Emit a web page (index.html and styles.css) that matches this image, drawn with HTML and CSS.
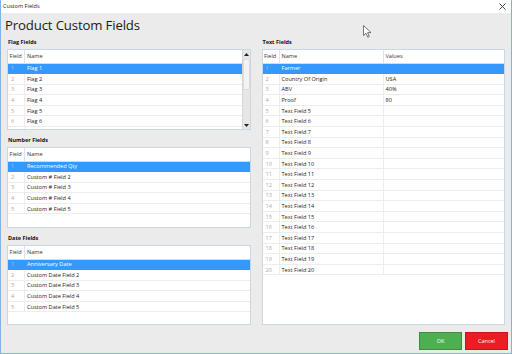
FILE: index.html
```html
<!DOCTYPE html>
<html>
<head>
<meta charset="utf-8">
<link rel="stylesheet" href="styles.css">
</head>
<body>
<div class="window">
  <div class="titlebar">
    <span class="title">Custom Fields</span>
    <svg class="close" width="7" height="7" viewBox="0 0 7 7"><path d="M0.5 0.5L6.5 6.5M6.5 0.5L0.5 6.5" stroke="#333" stroke-width="0.9" fill="none"/></svg>
  </div>
  <div class="content">
    <h1 class="heading">Product Custom Fields</h1>
    <div class="columns">
      <div class="col">
        <section class="group">
          <div class="group-label">Flag Fields</div>
          <div class="grid grid-flag">
            <div class="grid-body">
              <div class="row head"><div class="c num">Field</div><div class="c name">Name</div></div>
              <div class="row sel"><div class="c num">1</div><div class="c name">Flag 1</div></div>
              <div class="row"><div class="c num">2</div><div class="c name">Flag 2</div></div>
              <div class="row"><div class="c num">3</div><div class="c name">Flag 3</div></div>
              <div class="row"><div class="c num">4</div><div class="c name">Flag 4</div></div>
              <div class="row"><div class="c num">5</div><div class="c name">Flag 5</div></div>
              <div class="row"><div class="c num">6</div><div class="c name">Flag 6</div></div>
              <div class="row"><div class="c num"></div><div class="c name"></div></div>
            </div>
            <div class="scrollbar">
              <div class="sb-btn"><svg width="5" height="3" viewBox="0 0 5 3"><path d="M0 3L2.5 0L5 3Z" fill="#222"/></svg></div>
              <div class="sb-track"><div class="sb-thumb"></div></div>
              <div class="sb-btn"><svg width="5" height="3" viewBox="0 0 5 3"><path d="M0 0L2.5 3L5 0Z" fill="#222"/></svg></div>
            </div>
          </div>
        </section>
        <section class="group">
          <div class="group-label">Number Fields</div>
          <div class="grid grid-small">
            <div class="grid-body">
              <div class="row head"><div class="c num">Field</div><div class="c name">Name</div></div>
              <div class="row sel"><div class="c num">1</div><div class="c name">Recommended Qty</div></div>
              <div class="row"><div class="c num">2</div><div class="c name">Custom # Field 2</div></div>
              <div class="row"><div class="c num">3</div><div class="c name">Custom # Field 3</div></div>
              <div class="row"><div class="c num">4</div><div class="c name">Custom # Field 4</div></div>
              <div class="row"><div class="c num">5</div><div class="c name">Custom # Field 5</div></div>
            </div>
          </div>
        </section>
        <section class="group">
          <div class="group-label">Date Fields</div>
          <div class="grid grid-small grid-date">
            <div class="grid-body">
              <div class="row head"><div class="c num">Field</div><div class="c name">Name</div></div>
              <div class="row sel"><div class="c num">1</div><div class="c name">Anniversary Date</div></div>
              <div class="row"><div class="c num">2</div><div class="c name">Custom Date Field 2</div></div>
              <div class="row"><div class="c num">3</div><div class="c name">Custom Date Field 3</div></div>
              <div class="row"><div class="c num">4</div><div class="c name">Custom Date Field 4</div></div>
              <div class="row"><div class="c num">5</div><div class="c name">Custom Date Field 5</div></div>
            </div>
          </div>
        </section>
      </div>
      <div class="col">
        <section class="group group-text">
          <div class="group-label">Text Fields</div>
          <div class="grid grid-text">
            <div class="grid-body">
              <div class="row head"><div class="c num">Field</div><div class="c name">Name</div><div class="c val">Values</div></div>
              <div class="row sel"><div class="c num">1</div><div class="c name">Farmer</div><div class="c val"></div></div>
              <div class="row"><div class="c num">2</div><div class="c name">Country Of Origin</div><div class="c val">USA</div></div>
              <div class="row"><div class="c num">3</div><div class="c name">ABV</div><div class="c val">40%</div></div>
              <div class="row"><div class="c num">4</div><div class="c name">Proof</div><div class="c val">80</div></div>
              <div class="row"><div class="c num">5</div><div class="c name">Text Field 5</div><div class="c val"></div></div>
              <div class="row"><div class="c num">6</div><div class="c name">Text Field 6</div><div class="c val"></div></div>
              <div class="row"><div class="c num">7</div><div class="c name">Text Field 7</div><div class="c val"></div></div>
              <div class="row"><div class="c num">8</div><div class="c name">Text Field 8</div><div class="c val"></div></div>
              <div class="row"><div class="c num">9</div><div class="c name">Text Field 9</div><div class="c val"></div></div>
              <div class="row"><div class="c num">10</div><div class="c name">Text Field 10</div><div class="c val"></div></div>
              <div class="row"><div class="c num">11</div><div class="c name">Text Field 11</div><div class="c val"></div></div>
              <div class="row"><div class="c num">12</div><div class="c name">Text Field 12</div><div class="c val"></div></div>
              <div class="row"><div class="c num">13</div><div class="c name">Text Field 13</div><div class="c val"></div></div>
              <div class="row"><div class="c num">14</div><div class="c name">Text Field 14</div><div class="c val"></div></div>
              <div class="row"><div class="c num">15</div><div class="c name">Text Field 15</div><div class="c val"></div></div>
              <div class="row"><div class="c num">16</div><div class="c name">Text Field 16</div><div class="c val"></div></div>
              <div class="row"><div class="c num">17</div><div class="c name">Text Field 17</div><div class="c val"></div></div>
              <div class="row"><div class="c num">18</div><div class="c name">Text Field 18</div><div class="c val"></div></div>
              <div class="row"><div class="c num">19</div><div class="c name">Text Field 19</div><div class="c val"></div></div>
              <div class="row"><div class="c num">20</div><div class="c name">Text Field 20</div><div class="c val"></div></div>
            </div>
          </div>
        </section>
      </div>
    </div>
    <div class="actions">
      <button class="btn btn-ok">OK</button>
      <button class="btn btn-cancel">Cancel</button>
    </div>
  </div>
  <svg class="cursor" width="9" height="13" viewBox="0 0 9 13"><path d="M0.5 0.5L0.5 10.5L3 8.2L4.8 12.2L6.3 11.5L4.6 7.6L8 7.6Z" fill="#fff" stroke="#555" stroke-width="0.8" stroke-linejoin="round"/></svg>
</div>
</body>
</html>
```

FILE: styles.css
```css
* { box-sizing: border-box; }
html, body { margin: 0; padding: 0; }
body {
  width: 512px;
  height: 354px;
  overflow: hidden;
  font-family: "Open Sans", "Noto Sans", sans-serif;
  color: #222;
}
.window {
  position: relative;
  width: 512px;
  height: 354px;
  border: 1px solid #7fb2e5;
  border-top: none;
  background: #ebebeb;
  display: flex;
  flex-direction: column;
}
.titlebar {
  height: 13px;
  background: #fff;
  display: flex;
  align-items: center;
  justify-content: space-between;
  padding: 0 5px 0 2px;
  flex: none;
}
.title {
  font-size: 5.6px;
  color: #222;
  line-height: 1;
}
.close { display: block; }
.content {
  flex: 1;
  display: flex;
  flex-direction: column;
  padding: 0 6px 3px 6px;
}
.heading {
  margin: 0 0 0 -2px;
  height: 23px;
  font-weight: normal;
  font-size: 13.2px;
  line-height: 23px;
  padding-top: 1px;
  letter-spacing: -0.15px;
  color: #1a1a1a;
  flex: none;
}
.columns {
  display: flex;
  gap: 11px;
  height: 289px;
  flex: none;
}
.col {
  flex: 1;
  display: flex;
  flex-direction: column;
  gap: 4px;
}
.group { display: flex; flex-direction: column; }
.group-text { height: 289px; }
.group-label {
  height: 13px;
  line-height: 13px;
  font-size: 5.5px;
  font-weight: bold;
  padding-left: 1px;
  color: #111;
}
.grid {
  border: 1px solid #c9d8e9;
  background: #fff;
  display: flex;
  overflow: hidden;
}
.grid-flag { height: 81px; }
.grid-small { height: 81px; }
.grid-date { height: 80px; }
.grid-text { flex: 1; }
.grid-body {
  flex: 1;
  display: flex;
  flex-direction: column;
  overflow: hidden;
}
.row {
  display: grid;
  grid-template-columns: 17px 1fr;
  height: 10.6px;
  flex: none;
  border-bottom: 1px solid #ededed;
  font-size: 5.6px;
  align-items: stretch;
}
.grid-text .row { grid-template-columns: 17px 104px 1fr; }
.row.head {
  height: 13.5px;
  border-bottom: 1px solid #dadada;
  background: #fff;
}
.c {
  display: flex;
  align-items: center;
  padding-left: 2px;
  white-space: nowrap;
  overflow: hidden;
  border-right: 1px solid #ededed;
}
.c:last-child { border-right: none; }
.row .num { color: #aaa; padding-left: 3px; }
.row.head .c { color: #333; padding-left: 1.5px; border-right-color: #e2e2e2; }
.row.head .name, .row.head .val { padding-left: 2px; }
.row.sel { background: #3399ff; border-bottom-color: #3399ff; }
.row.sel .c { color: #fff; border-right-color: #3399ff; }
.row.sel .num { color: #9fcfff; }
.scrollbar {
  width: 8px;
  flex: none;
  background: #e6e6e6;
  border-left: 1px solid #d6d6d6;
  display: flex;
  flex-direction: column;
}
.sb-btn {
  height: 8px;
  display: flex;
  align-items: center;
  justify-content: center;
  flex: none;
}
.sb-btn svg { display: block; }
.sb-track { flex: 1; position: relative; }
.sb-thumb {
  height: 31px;
  margin: 1px 0 0 0;
  background: #f3f3f3;
  border: 1px solid #dcdcdc;
}
.actions {
  margin-top: 7px;
  display: flex;
  justify-content: flex-end;
  gap: 3px;
}
.btn {
  width: 43px;
  height: 18px;
  font-family: "Open Sans", "Noto Sans", sans-serif;
  font-size: 5.5px;
  color: #fff;
  border: 1px solid;
  padding: 0;
  margin: 0;
}
.btn-ok { background: #4caf50; border-color: #3b8e3e; }
.btn-cancel { background: #ec1c24; border-color: #c8141b; margin-right: -3px; }
.cursor {
  position: absolute;
  left: 362px;
  top: 25px;
}
```
